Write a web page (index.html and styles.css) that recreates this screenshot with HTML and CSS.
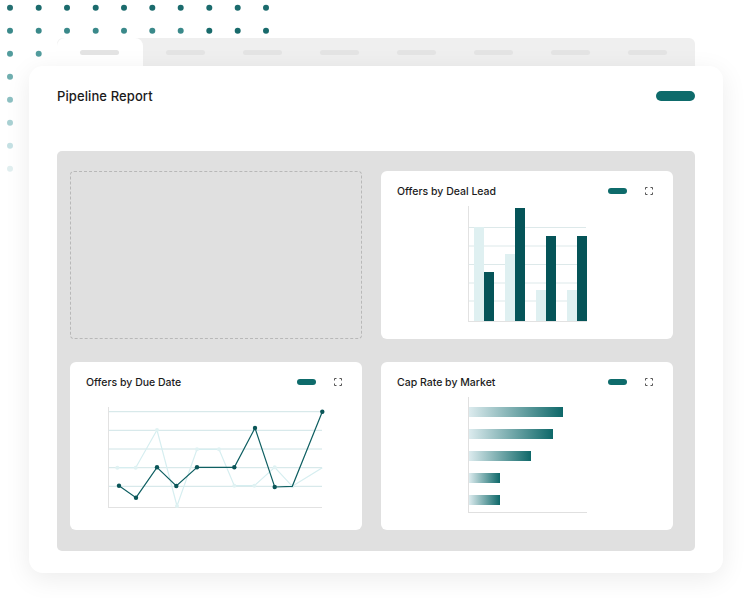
FILE: index.html
```html
<!DOCTYPE html>
<html>
<head>
<meta charset="utf-8">
<title>Pipeline Report</title>
<link rel="stylesheet" href="styles.css">
</head>
<body>
<div class="page">
  <svg class="dots" width="300" height="190" viewBox="0 0 300 190">
    <g fill="#1b6b6d">
      <circle cx="10" cy="7.7" r="3" fill="#246f71"/><circle cx="38.7" cy="7.7" r="3"/><circle cx="67" cy="7.7" r="3"/><circle cx="95.7" cy="7.7" r="3"/><circle cx="124" cy="7.7" r="3"/><circle cx="152.3" cy="7.7" r="3"/><circle cx="180.7" cy="7.7" r="3"/><circle cx="209.3" cy="7.7" r="3"/><circle cx="237.7" cy="7.7" r="3"/><circle cx="266" cy="7.7" r="3"/>
    </g>
    <g fill="#3a898a">
      <circle cx="10" cy="30.7" r="3"/><circle cx="38.7" cy="30.7" r="3"/><circle cx="67" cy="30.7" r="3"/><circle cx="95.7" cy="30.7" r="3"/><circle cx="124" cy="30.7" r="3"/><circle cx="152.3" cy="30.7" r="3"/><circle cx="180.7" cy="30.7" r="3"/><circle cx="209.3" cy="30.7" r="3" fill="#186a6b"/><circle cx="237.7" cy="30.7" r="3" fill="#186a6b"/><circle cx="266" cy="30.7" r="3" fill="#186a6b"/>
    </g>
    <g fill="#529c9d">
      <circle cx="10" cy="53.7" r="3"/><circle cx="38.7" cy="53.7" r="3"/>
    </g>
    <circle cx="10" cy="76.7" r="3" fill="#6faeaf"/>
    <circle cx="10" cy="99.7" r="3" fill="#8dc0c2"/>
    <circle cx="10" cy="122.7" r="3" fill="#a9d1d3"/>
    <circle cx="10" cy="145.7" r="3" fill="#c5e1e4"/>
    <circle cx="10" cy="168.7" r="3" fill="#e1eff0"/>
  </svg>

  <div class="tabs">
    <div class="tab active"><span class="tab-pill"></span></div>
    <div class="tab"><span class="tab-pill"></span></div>
    <div class="tab"><span class="tab-pill"></span></div>
    <div class="tab"><span class="tab-pill"></span></div>
    <div class="tab"><span class="tab-pill"></span></div>
    <div class="tab"><span class="tab-pill"></span></div>
    <div class="tab"><span class="tab-pill"></span></div>
    <div class="tab"><span class="tab-pill"></span></div>
  </div>

  <div class="report">
    <div class="report-head">
      <h1 class="report-title">Pipeline Report</h1>
      <span class="btn-pill"></span>
    </div>

    <div class="board">
      <div class="slot-empty"></div>

      <div class="widget">
        <div class="widget-head">
          <span class="widget-title">Offers by Deal Lead</span>
          <span class="widget-pill"></span>
          <svg class="expand" width="8" height="8" viewBox="0 0 8 8"><path d="M0.5 2.5V0.5H2.5M5.5 0.5H7.5V2.5M7.5 5.5V7.5H5.5M2.5 7.5H0.5V5.5"/></svg>
        </div>
        <svg class="chart" width="292" height="136" viewBox="0 0 292 136">
          <g stroke="#dde9ea" stroke-width="1">
            <line x1="87" y1="24.5" x2="205" y2="24.5"/>
            <line x1="87" y1="43" x2="205" y2="43"/>
            <line x1="87" y1="61.5" x2="205" y2="61.5"/>
            <line x1="87" y1="80" x2="205" y2="80"/>
            <line x1="87" y1="98" x2="205" y2="98"/>
          </g>
          <g fill="#dff0f1">
            <rect x="93" y="24" width="10" height="94"/>
            <rect x="124" y="51" width="10" height="67"/>
            <rect x="155" y="87" width="10" height="31"/>
            <rect x="186" y="87" width="10" height="31"/>
          </g>
          <g fill="#055458">
            <rect x="103" y="69" width="10" height="49"/>
            <rect x="134" y="5" width="10" height="113"/>
            <rect x="165" y="33" width="10" height="85"/>
            <rect x="196" y="33" width="10" height="85"/>
          </g>
          <g stroke="#e2e2e2" stroke-width="1">
            <line x1="87.5" y1="3" x2="87.5" y2="118.5"/>
            <line x1="87" y1="118.5" x2="206" y2="118.5"/>
          </g>
        </svg>
      </div>

      <div class="widget">
        <div class="widget-head">
          <span class="widget-title">Offers by Due Date</span>
          <span class="widget-pill"></span>
          <svg class="expand" width="8" height="8" viewBox="0 0 8 8"><path d="M0.5 2.5V0.5H2.5M5.5 0.5H7.5V2.5M7.5 5.5V7.5H5.5M2.5 7.5H0.5V5.5"/></svg>
        </div>
        <svg class="chart" width="292" height="136" viewBox="0 0 292 136">
          <g stroke="#cfe4e6" stroke-width="1">
            <line x1="38" y1="17.7" x2="252" y2="17.7"/>
            <line x1="38" y1="36.3" x2="252" y2="36.3"/>
            <line x1="38" y1="55" x2="252" y2="55"/>
            <line x1="38" y1="73.7" x2="252" y2="73.7"/>
            <line x1="38" y1="92.3" x2="252" y2="92.3"/>
          </g>
          <g stroke="#e2e2e2" stroke-width="1">
            <line x1="38.5" y1="13" x2="38.5" y2="113.5"/>
            <line x1="38" y1="113.5" x2="252" y2="113.5"/>
          </g>
          <polyline fill="none" stroke="#d6eef0" stroke-width="1.2" points="47.3,73.7 65.7,73.7 87,36 107,112 127,55.3 149,55.3 164.3,91.7 184.3,91.7 204.7,73.3 222.3,92.3 252.3,73.7"/>
          <g fill="#e0f2f3">
            <circle cx="47.3" cy="73.7" r="2"/><circle cx="65.7" cy="73.7" r="2"/><circle cx="87" cy="36" r="2"/><circle cx="107" cy="112" r="2"/><circle cx="127" cy="55.3" r="2"/><circle cx="149" cy="55.3" r="2"/><circle cx="164.3" cy="91.7" r="2"/><circle cx="184.3" cy="91.7" r="2"/><circle cx="204.7" cy="73.3" r="2"/><circle cx="222.3" cy="92.3" r="2"/>
          </g>
          <polyline fill="none" stroke="#0f5f62" stroke-width="1.2" points="49,91.7 66,103.7 87,73.3 106.3,92 127,73.3 164.3,73.3 185,34 204.7,93 222.3,92.3 252.3,17.7"/>
          <g fill="#0a5558">
            <circle cx="49" cy="91.7" r="2.2"/><circle cx="66" cy="103.7" r="2.2"/><circle cx="87" cy="73.3" r="2.2"/><circle cx="106.3" cy="92" r="2.2"/><circle cx="127" cy="73.3" r="2.2"/><circle cx="164.3" cy="73.3" r="2.2"/><circle cx="185" cy="34" r="2.2"/><circle cx="204.7" cy="93" r="2.2"/><circle cx="252.3" cy="17.7" r="2.2"/>
          </g>
        </svg>
      </div>

      <div class="widget">
        <div class="widget-head">
          <span class="widget-title">Cap Rate by Market</span>
          <span class="widget-pill"></span>
          <svg class="expand" width="8" height="8" viewBox="0 0 8 8"><path d="M0.5 2.5V0.5H2.5M5.5 0.5H7.5V2.5M7.5 5.5V7.5H5.5M2.5 7.5H0.5V5.5"/></svg>
        </div>
        <svg class="chart" width="292" height="136" viewBox="0 0 292 136">
          <defs>
            <linearGradient id="capgrad" x1="0" y1="0" x2="1" y2="0">
              <stop offset="0" stop-color="#dcebee"/>
              <stop offset="1" stop-color="#0e6869"/>
            </linearGradient>
          </defs>
          <g fill="url(#capgrad)">
            <rect x="88" y="13" width="94" height="10"/>
            <rect x="88" y="35" width="84" height="10"/>
            <rect x="88" y="57" width="62" height="10"/>
            <rect x="88" y="79" width="31" height="10"/>
            <rect x="88" y="101" width="31" height="10"/>
          </g>
          <g stroke="#e0e0e0" stroke-width="1">
            <line x1="87.5" y1="3" x2="87.5" y2="118.5"/>
            <line x1="87" y1="118.5" x2="206" y2="118.5"/>
          </g>
        </svg>
      </div>
    </div>
  </div>
</div>
</body>
</html>
```

FILE: styles.css
```css
* { box-sizing: border-box; }

html, body {
  margin: 0;
  padding: 0;
  background: #ffffff;
  font-family: "Inter", "Open Sans", "Liberation Sans", sans-serif;
  color: #1c1c1c;
}

.page {
  position: relative;
  width: 748px;
  height: 598px;
  padding: 38px 25px 0 29px;
}

.dots {
  position: absolute;
  left: 0;
  top: 0;
  z-index: 0;
}

.tabs {
  position: relative;
  z-index: 1;
  display: flex;
  height: 28px;
  margin: 0 28px;
  background: #efefef;
  border-radius: 6px 6px 0 0;
}

.tab {
  display: flex;
  align-items: center;
  padding: 0 19px;
}

.tab.active {
  background: #ffffff;
  padding: 0 24px 0 23px;
  border-radius: 8px 8px 0 0;
}

.tab.active + .tab {
  margin-left: 4px;
}

.tab-pill {
  display: block;
  width: 39px;
  height: 5px;
  border-radius: 3px;
  background: #e4e4e4;
}

.report {
  position: relative;
  z-index: 1;
  width: 694px;
  height: 507px;
  background: #ffffff;
  border-radius: 14px;
  box-shadow: 0 6px 26px rgba(0, 0, 0, 0.08);
  padding: 20px 28px 22px;
}

.report-head {
  display: flex;
  align-items: center;
  justify-content: space-between;
  height: 20px;
}

.report-title {
  margin: 0;
  font-size: 13px;
  font-weight: 500;
  letter-spacing: 0.1px;
  color: #1a1a1a;
}

.btn-pill {
  display: block;
  width: 39px;
  height: 10px;
  border-radius: 5px;
  background: #0e6b6b;
}

.board {
  margin-top: 45px;
  height: 400px;
  background: #e0e0e0;
  border-radius: 5px;
  padding: 20px 22px 21px 13px;
  display: grid;
  grid-template-columns: 292px 292px;
  grid-template-rows: 168px 168px;
  column-gap: 19px;
  row-gap: 23px;
}

.slot-empty {
  border: 1px dashed #b8b8b8;
  border-radius: 4px;
}

.widget {
  background: #ffffff;
  border-radius: 6px;
  display: flex;
  flex-direction: column;
  overflow: hidden;
}

.widget-head {
  display: flex;
  align-items: center;
  height: 24px;
  margin-top: 8px;
  padding: 0 20px 0 16px;
}

.widget-title {
  flex: 1;
  font-size: 10.5px;
  font-weight: 500;
  color: #1c1c1c;
}

.widget-pill {
  display: block;
  width: 19px;
  height: 6px;
  border-radius: 3px;
  background: #0e6b6b;
  margin-right: 18px;
}

.expand {
  display: block;
}

.expand path {
  fill: none;
  stroke: #555555;
  stroke-width: 1;
}

.chart {
  display: block;
}
```
